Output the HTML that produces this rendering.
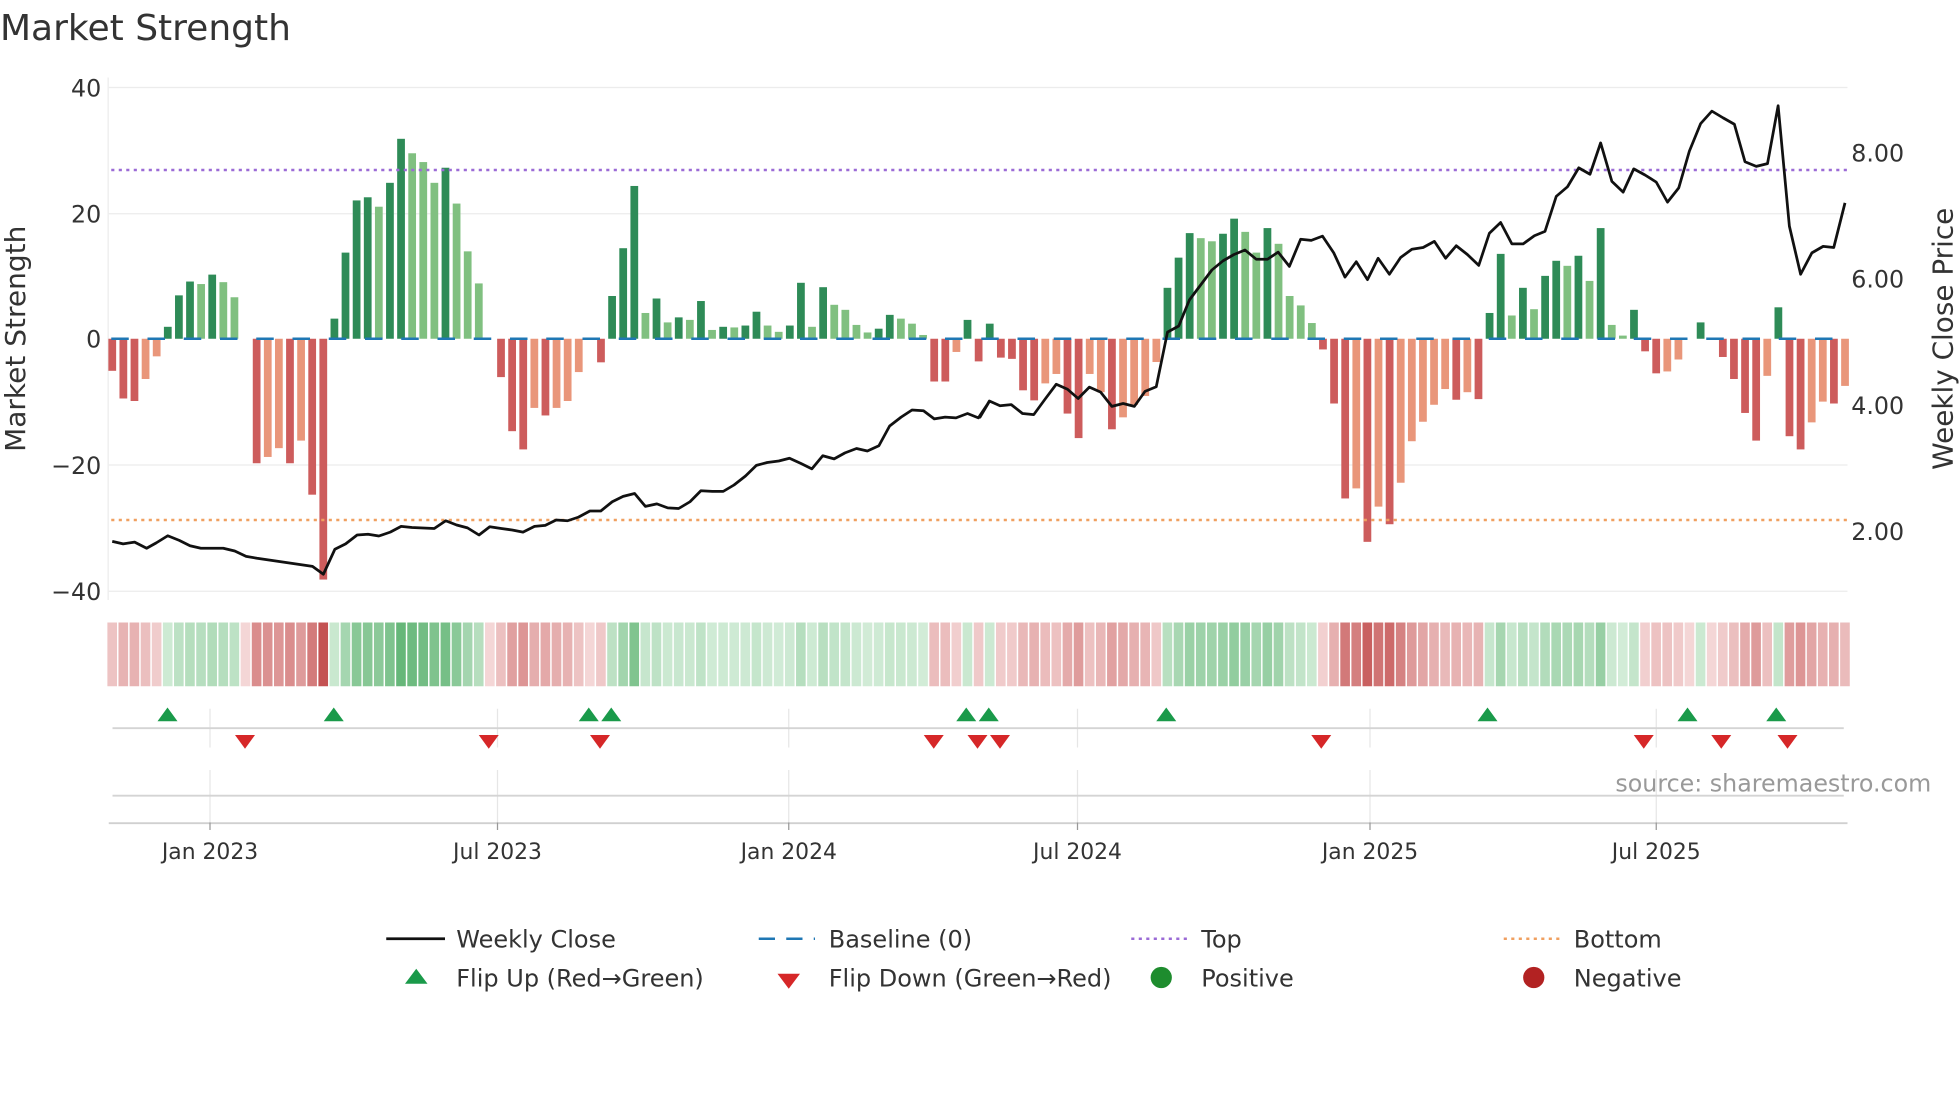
<!DOCTYPE html>
<html><head><meta charset="utf-8">
<style>
html,body{margin:0;padding:0;background:#fff;}
svg{display:block;font-family:"DejaVu Sans","Liberation Sans",sans-serif;}
</style></head>
<body>
<svg id="s" width="1960" height="1102" viewBox="0 0 1568 881.6" xmlns="http://www.w3.org/2000/svg">
<rect width="1568" height="882" fill="#fff"/>
<g id="grid" stroke="#ececec" stroke-width="1">
<line x1="87" y1="70" x2="1478" y2="70"/><line x1="87" y1="171" x2="1478" y2="171"/>
<line x1="87" y1="372" x2="1478" y2="372"/><line x1="87" y1="473" x2="1478" y2="473"/>
<line x1="86.5" y1="62" x2="86.5" y2="480"/>
</g>
<g id="bars"></g>
<line x1="89" y1="271" x2="1478" y2="271" stroke="#1f77b4" stroke-width="2" stroke-dasharray="14,15"/>
<line x1="89" y1="136" x2="1478" y2="136" stroke="#9b6bd6" stroke-width="2" stroke-dasharray="2.5,3.5"/>
<line x1="89" y1="416" x2="1478" y2="416" stroke="#f0a060" stroke-width="2" stroke-dasharray="2.5,3.5"/>
<polyline id="price" fill="none" stroke="#111" stroke-width="2.2" stroke-linejoin="round"/>
<g id="strip"></g>
<g stroke="#e6e6e6" stroke-width="1">
<line x1="168" y1="567" x2="168" y2="598"/><line x1="398" y1="567" x2="398" y2="598"/><line x1="631" y1="567" x2="631" y2="598"/><line x1="862" y1="567" x2="862" y2="598"/><line x1="1096" y1="567" x2="1096" y2="598"/><line x1="1325" y1="567" x2="1325" y2="598"/>
<line x1="168" y1="616" x2="168" y2="658"/><line x1="398" y1="616" x2="398" y2="658"/><line x1="631" y1="616" x2="631" y2="658"/><line x1="862" y1="616" x2="862" y2="658"/><line x1="1096" y1="616" x2="1096" y2="658"/><line x1="1325" y1="616" x2="1325" y2="658"/>
</g>
<line x1="90" y1="582.5" x2="1475" y2="582.5" stroke="#d4d4d4" stroke-width="1.5"/>
<line x1="90" y1="636.5" x2="1475" y2="636.5" stroke="#d4d4d4" stroke-width="1.5"/>
<line x1="87" y1="658.5" x2="1478" y2="658.5" stroke="#d0d0d0" stroke-width="1.5"/>
<g stroke="#999" stroke-width="1">
<line x1="168" y1="658" x2="168" y2="664"/><line x1="398" y1="658" x2="398" y2="664"/><line x1="631" y1="658" x2="631" y2="664"/><line x1="862" y1="658" x2="862" y2="664"/><line x1="1096" y1="658" x2="1096" y2="664"/><line x1="1325" y1="658" x2="1325" y2="664"/>
</g>
<g id="marks"></g>
<g fill="#333" font-size="17.5" text-anchor="middle">
<text x="168" y="687">Jan 2023</text><text x="398" y="687">Jul 2023</text><text x="631" y="687">Jan 2024</text><text x="862" y="687">Jul 2024</text><text x="1096" y="687">Jan 2025</text><text x="1325" y="687">Jul 2025</text>
</g>
<text x="1545" y="633" fill="#999" font-size="19" text-anchor="end">source: sharemaestro.com</text>
<text x="0" y="32" fill="#333" font-size="28.8">Market Strength</text>
<g fill="#333" font-size="19" text-anchor="end">
<text x="81" y="77">40</text><text x="81" y="178">20</text><text x="81" y="278">0</text><text x="81" y="379">−20</text><text x="81" y="480">−40</text>
</g>
<g fill="#333" font-size="19">
<text x="1481" y="129">8.00</text><text x="1481" y="230">6.00</text><text x="1481" y="331">4.00</text><text x="1481" y="432">2.00</text>
</g>
<text transform="translate(20,271) rotate(-90)" fill="#333" font-size="22.4" text-anchor="middle">Market Strength</text>
<text transform="translate(1562,271) rotate(-90)" fill="#333" font-size="22.3" text-anchor="middle">Weekly Close Price</text>
<g font-size="19.2" fill="#333">
<line x1="309" y1="751" x2="356" y2="751" stroke="#111" stroke-width="2.2"/>
<text x="365" y="758">Weekly Close</text>
<line x1="607" y1="751" x2="652" y2="751" stroke="#1f77b4" stroke-width="2" stroke-dasharray="13,9"/>
<text x="663" y="758">Baseline (0)</text>
<line x1="905" y1="751" x2="950" y2="751" stroke="#9b6bd6" stroke-width="2" stroke-dasharray="2.5,3.5"/>
<text x="961" y="758">Top</text>
<line x1="1203" y1="751" x2="1248" y2="751" stroke="#f0a060" stroke-width="2" stroke-dasharray="2.5,3.5"/>
<text x="1259" y="758">Bottom</text>
<polygon points="324,787 342,787 333,775" fill="#1a9a4a"/>
<text x="365" y="789">Flip Up (Red→Green)</text>
<polygon points="622,779 640,779 631,791" fill="#d62728"/>
<text x="663" y="789">Flip Down (Green→Red)</text>
<circle cx="929" cy="782" r="8.5" fill="#1e8c2e"/>
<text x="961" y="789">Positive</text>
<circle cx="1227" cy="782" r="8.5" fill="#b22222"/>
<text x="1259" y="789">Negative</text>
</g>
</svg>
<script>
var NS="http://www.w3.org/2000/svg";
var b1=[[-5.1,'R'],[-9.5,'R'],[-9.9,'R'],[-6.4,'O'],[-2.8,'O'],[1.9,'D'],[6.9,'D'],[9.1,'D'],[8.7,'L'],[10.2,'D'],[9,'L'],[6.6,'L'],[0,'Z'],[-19.8,'R'],[-18.8,'O'],[-17.4,'O'],[-19.8,'R'],[-16.2,'O'],[-24.8,'R'],[-38.3,'R'],[3.2,'D'],[13.7,'D'],[22,'D'],[22.5,'D'],[21,'L'],[24.8,'D'],[31.8,'D'],[29.5,'L'],[28.1,'L'],[24.8,'L'],[27.2,'D'],[21.5,'L'],[13.9,'L'],[8.8,'L'],[0,'Z'],[-6.1,'R'],[-14.7,'R'],[-17.6,'R'],[-11,'O'],[-12.2,'R'],[-11,'O'],[-9.9,'O'],[-5.3,'O'],[0,'Z'],[-3.75,'R'],[6.8,'D'],[14.4,'D'],[24.3,'D'],[4.1,'L'],[6.4,'D'],[2.6,'L'],[3.4,'D'],[3,'L'],[6,'D'],[1.4,'L'],[1.9,'D'],[1.8,'L'],[2.1,'D'],[4.3,'D'],[2.1,'L'],[1.1,'L'],[2.1,'D'],[8.9,'D'],[1.9,'L'],[8.2,'D'],[5.4,'L'],[4.6,'L'],[2.2,'L'],[1,'L'],[1.6,'D'],[3.8,'D'],[3.2,'L'],[2.4,'L'],[0.6,'L'],[-6.8,'R'],[-6.8,'R'],[-2.1,'O'],[3,'D'],
[-3.6,'R'],[2.4,'D'],[-3,'R'],[-3.2,'R'],[-8.2,'R'],[-9.8,'R'],[-7.1,'O'],[-5.6,'O'],[-11.9,'R'],[-15.8,'R'],[-5.6,'O'],[-8.5,'O'],[-14.4,'R'],[-12.5,'O'],[-10.5,'O'],[-9.1,'O'],[-3.7,'O'],[8.1,'D'],[12.9,'D'],[16.8,'D'],[16,'L'],[15.5,'L'],[16.7,'D'],[19.1,'D'],[17,'L'],[13.7,'L'],[17.6,'D'],[15.1,'L'],[6.8,'L'],[5.3,'L'],[2.5,'L'],[-1.7,'R'],[-10.3,'R'],[-25.4,'R'],[-23.8,'O'],[-32.3,'R'],[-26.7,'O'],[-29.5,'R'],[-22.9,'O'],[-16.3,'O'],[-13.2,'O'],[-10.5,'O'],[-8,'O'],[-9.7,'R'],[-8.5,'O'],[-9.6,'R'],[4.1,'D'],[13.5,'D'],[3.7,'L'],[8.1,'D'],[4.7,'L'],[10,'D'],[12.4,'D'],[11.6,'L'],[13.2,'D'],[9.2,'L'],[17.6,'D'],[2.2,'L'],[0.5,'L'],[4.6,'D'],[-2,'R'],[-5.5,'R'],[-5.2,'O'],[-3.3,'O'],[0,'Z'],[2.6,'D'],[0,'Z'],[-2.9,'R'],[-6.4,'R'],[-11.8,'R'],[-16.2,'R'],[-5.9,'O'],[5,'D'],[-15.5,'R'],[-17.6,'R'],[-13.3,'O'],[-10,'O'],[-10.3,'R'],[-7.5,'O']];
var col={D:'#2e8b57',L:'#80c080',R:'#cd5c5c',O:'#e9967a',Z:'#fff'};
var bars=document.getElementById('bars'),strip=document.getElementById('strip');
function mix(a,b,t){return 'rgb('+a.map(function(v,i){return Math.round(v+(b[i]-v)*t)}).join(',')+')';}
b1.forEach(function(d,i){
 var cx=89.8+i*8.886,v=d[0];
 if(v!==0){var r=document.createElementNS(NS,'rect');var y0=271,y1=271-v*5.03;
  r.setAttribute('x',cx-3.1);r.setAttribute('width',6.2);r.setAttribute('y',Math.min(y0,y1));r.setAttribute('height',Math.abs(y1-y0));r.setAttribute('fill',col[d[1]]);bars.appendChild(r);}
 var t=Math.min(Math.abs(v)/36,1),c;
 if(v>0)c=mix([212,237,217],[88,176,108],t);else c=mix([244,214,214],[196,82,82],t);
 var s=document.createElementNS(NS,'rect');s.setAttribute('x',cx-3.9);s.setAttribute('width',7.7);s.setAttribute('y',498);s.setAttribute('height',51);s.setAttribute('fill',c);strip.appendChild(s);
});
var z1=[[176,1348],[193,1355],[211,1350],[230,1367],[245,1352],[263,1332],[281,1345],[298,1360],[315,1367],[350,1367],[368,1375],[386,1390],[403,1395],[490,1418],[507,1440],[525,1370],[542,1355],[560,1330],[577,1328],[594,1333],[612,1322],[629,1306],[646,1309],[681,1312],[699,1290],[716,1302],[733,1310],[751,1330],[768,1307],[786,1312],[803,1316],[820,1322],[838,1306],[855,1303],[872,1288],[890,1290],[907,1280],[925,1263],[942,1263],[960,1237],[977,1222],[995,1214],[1012,1250],[1030,1243],[1047,1254],[1064,1256],[1082,1237],[1099,1206],[1117,1208],[1134,1208],[1151,1190],[1169,1165],[1186,1135],[1203,1127],[1221,1123],[1238,1115],[1256,1130],[1273,1145],[1290,1108],[1308,1117],[1325,1100],[1343,1088],[1360,1095],[1378,1080],[1395,1025],[1413,1000],[1430,980],[1448,982],[1465,1005],[1482,1000],[1499,1002],[1517,990],[1534,1002],[1551,957]];
var z2=[[0,1000],[15,955],[32,968],[50,965],[68,990],[86,993],[104,950],[122,908],[140,922],[157,948],[175,916],[193,930],[211,970],[229,962],[247,970],[264,928],[282,915],[300,762],[318,745],[335,672],[353,630],[371,588],[389,562],[406,545],[424,532],[442,558],[460,558],[477,538],[495,578],[513,502],[530,505],[548,493],[566,540],[584,608],[602,565],[620,615],[637,555],[655,600],[673,553],[691,530],[709,525],[727,508],[745,555],[762,520],[780,545],[798,575],[815,485],[833,455],[851,515],[869,515],[887,492],[904,480],[922,382],[940,355],[958,302],[976,320],[993,232],[1011,340],[1029,370],[1046,305],[1064,322],[1082,342],[1100,398],[1118,358],[1135,255],[1153,178],[1171,143],[1189,162],[1207,180],[1224,285],[1242,298],[1260,290],[1277,128],[1295,465],[1313,600],[1331,540],[1349,522],[1366,525],[1384,400]];
var pts=[];
z1.forEach(function(p){pts.push((p[0]/1.96).toFixed(1)+','+(48+0.2857*p[1]).toFixed(1));});
z2.forEach(function(p){pts.push((784+p[0]/2).toFixed(1)+','+(48+0.2857*p[1]).toFixed(1));});
document.getElementById('price').setAttribute('points',pts.join(' '));
var marks=document.getElementById('marks');
[134,267,471,489,773,791,933,1190,1350,1421].forEach(function(x){var p=document.createElementNS(NS,'polygon');p.setAttribute('points',(x-8)+',577 '+(x+8)+',577 '+x+',566');p.setAttribute('fill','#1a9a4a');marks.appendChild(p);});
[196,391,480,747,782,800,1057,1315,1377,1430].forEach(function(x){var p=document.createElementNS(NS,'polygon');p.setAttribute('points',(x-8)+',588 '+(x+8)+',588 '+x+',599');p.setAttribute('fill','#d62728');marks.appendChild(p);});
</script>
</body></html>
